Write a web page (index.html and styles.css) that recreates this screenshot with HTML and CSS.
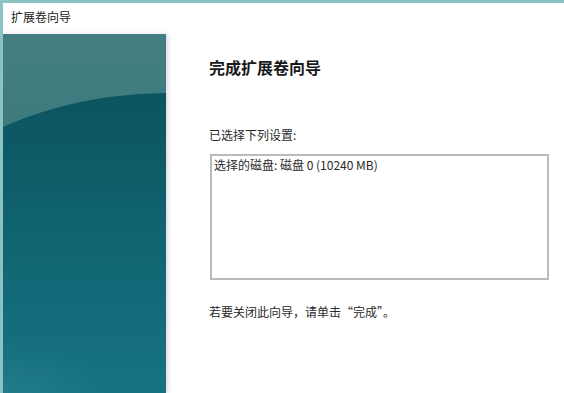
FILE: index.html
```html
<!DOCTYPE html>
<html>
  <head>
    <title>扩展卷向导</title>
    <link rel="stylesheet" href="styles.css">
  </head>
  <body>
    <div class="window">
      <div class="titlebar">扩展卷向导</div>
      <div class="wizard">
        <div class="side"></div>
        <div class="content">
          <h2>完成扩展卷向导</h2>
          <div class="label">已选择下列设置:</div>
          <div class="summary">选择的磁盘: 磁盘 0 (10240 MB)</div>
          <div class="hint">若要关闭此向导，请单击“完成”。</div>
        </div>
      </div>
    </div>
  </body>
</html>
```

FILE: styles.css
```css
html,
body {
  margin: 0;
  padding: 0;
  width: 564px;
  height: 393px;
  overflow: hidden;
  background: #ffffff;
}

body {
  font-family: "Noto Sans CJK SC", "Noto Sans", sans-serif;
  font-size: 12px;
  color: #2a2a2a;
}

.window {
  height: 100%;
  display: flex;
  flex-direction: column;
  border-top: 3px solid #8cc3c3;
  border-left: 3px solid #8cc3c3;
  box-sizing: border-box;
}

.titlebar {
  height: 31px;
  line-height: 28px;
  padding-left: 8px;
  font-size: 12px;
  color: #222;
  flex-shrink: 0;
}

.wizard {
  flex: 1;
  display: flex;
}

.side {
  position: relative;
  width: 163px;
  flex-shrink: 0;
  overflow: hidden;
  background: linear-gradient(180deg, #437f82 0%, #3a787c 40%, #2f7075 100%);
  box-shadow: 2px 0 4px rgba(170, 140, 170, 0.35);
}

/* darker body of the panel, its top edge is the curve */
.side:before {
  content: "";
  position: absolute;
  left: -133px;
  top: 59px;
  width: 600px;
  height: 402px;
  border-radius: 50%;
  background: linear-gradient(180deg, #0b5460 0%, #0e5f6b 25%, #146c7a 55%, #177483 80%);
}

/* soft glow at the bottom left */
.side:after {
  content: "";
  position: absolute;
  left: -80px;
  bottom: -60px;
  width: 180px;
  height: 110px;
  background: radial-gradient(ellipse at center, rgba(80, 160, 170, 0.22) 0%, rgba(80, 160, 170, 0) 70%);
}

.content {
  flex: 1;
  padding: 22px 15px 0 43px;
  display: flex;
  flex-direction: column;
}

h2 {
  margin: 0;
  font-size: 16px;
  font-weight: 700;
  line-height: 22px;
  color: #1a1a1a;
}

.label {
  margin-top: 48px;
  line-height: 18px;
}

.summary {
  margin-top: 10px;
  margin-left: 1px;
  height: 126px;
  box-sizing: border-box;
  border: 2px solid #bababa;
  padding: 0 2px;
  line-height: 18px;
}

.hint {
  margin-top: 23px;
  line-height: 18px;
}
```
